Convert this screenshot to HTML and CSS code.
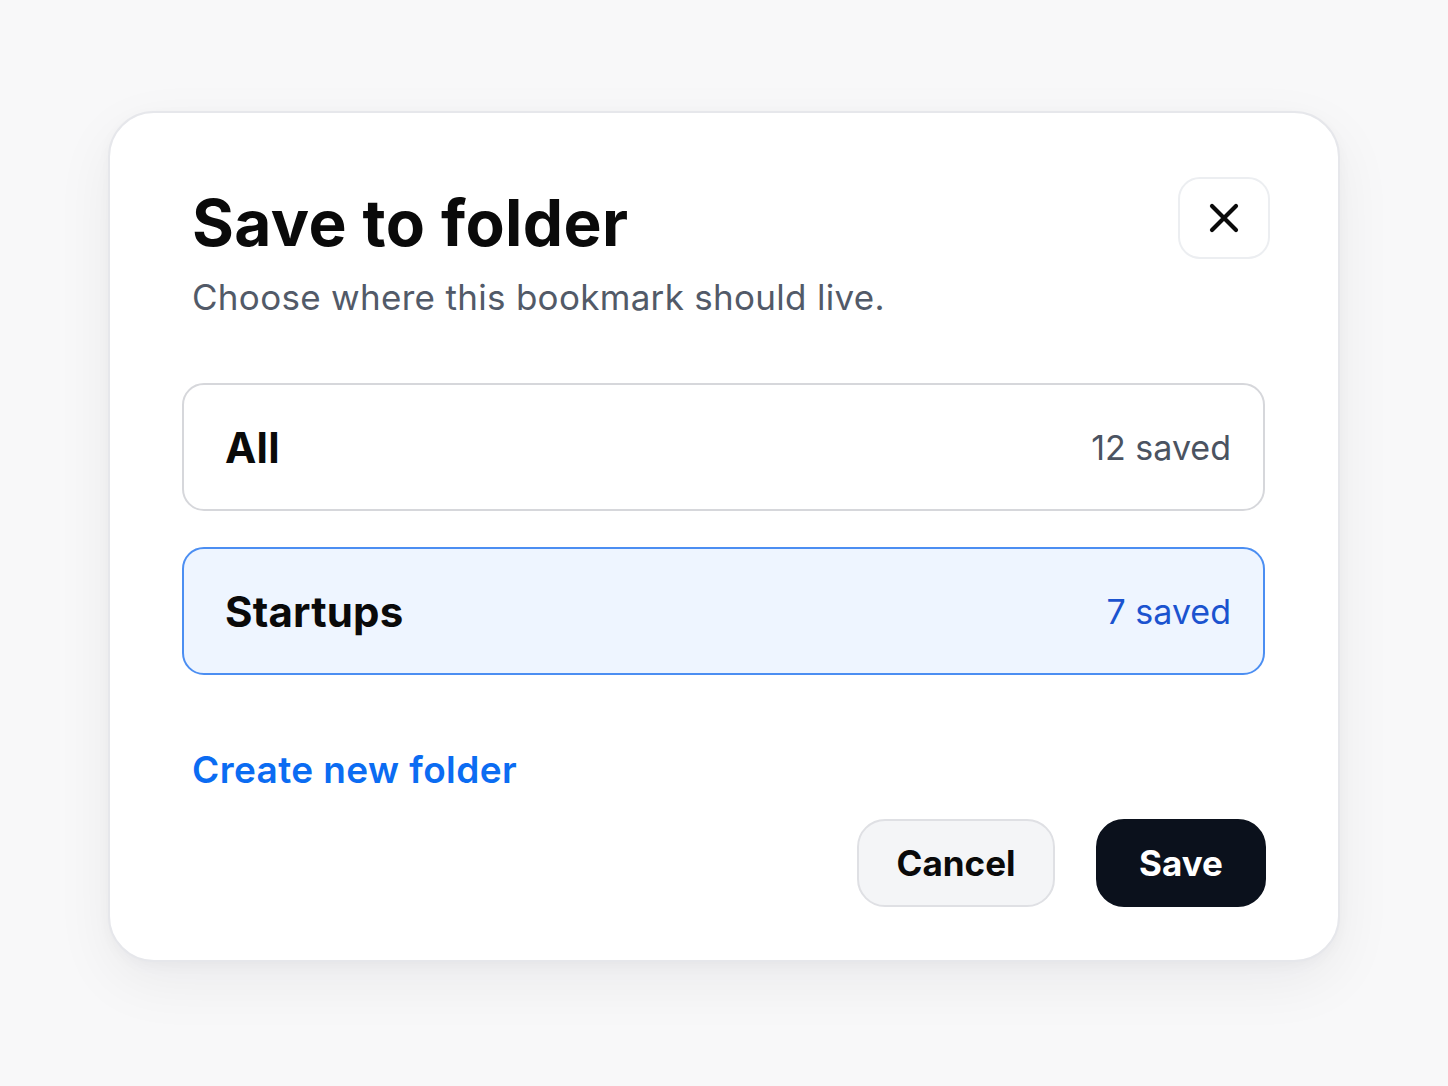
FILE: index.html
```html
<!DOCTYPE html>
<html lang="en">
<head>
<meta charset="utf-8">
<title>Save to folder</title>
<link rel="stylesheet" href="styles.css">
</head>
<body>
<div class="stage">
  <div class="dialog" role="dialog" aria-labelledby="dlg-title">
    <div class="header">
      <div class="heading">
        <h1 id="dlg-title" class="title">Save to folder</h1>
        <p class="subtitle">Choose where this bookmark should live.</p>
      </div>
      <button class="close" aria-label="Close">
        <svg width="30" height="30" viewBox="0 0 30 30" aria-hidden="true">
          <path d="M3 3 L27 27 M27 3 L3 27" stroke="#0a0a0a" stroke-width="4.2" stroke-linecap="round" fill="none"/>
        </svg>
      </button>
    </div>
    <div class="folders">
      <div class="folder">
        <span class="folder-name">All</span>
        <span class="folder-count">12 saved</span>
      </div>
      <div class="folder selected">
        <span class="folder-name">Startups</span>
        <span class="folder-count">7 saved</span>
      </div>
    </div>
    <a class="create" href="#">Create new folder</a>
    <div class="actions">
      <button class="btn btn-cancel">Cancel</button>
      <button class="btn btn-save">Save</button>
    </div>
  </div>
</div>
</body>
</html>
```

FILE: styles.css
```css
* { box-sizing: border-box; }

html, body {
  margin: 0;
  padding: 0;
  background: #f8f8f9;
  font-family: Inter, "Noto Sans", "Liberation Sans", sans-serif;
}

.stage {
  width: 1448px;
  height: 1086px;
  padding: 111px 108px 0 108px;
}

.dialog {
  width: 1232px;
  height: 851px;
  background: #ffffff;
  border: 2px solid #e6e7eb;
  border-radius: 46px;
  box-shadow: 0 20px 60px rgba(20, 24, 40, 0.06), 0 4px 14px rgba(20, 24, 40, 0.03);
  padding: 64px 68px 0 73px;
  display: flex;
  flex-direction: column;
}

.header {
  display: flex;
  justify-content: space-between;
  align-items: flex-start;
}

.heading {
  padding: 8px 0 0 9px;
}

.title {
  margin: 0;
  font-size: 64px;
  line-height: 76px;
  font-weight: 700;
  color: #0a0a0a;
  letter-spacing: 0.4px;
}

.subtitle {
  margin: 14px 0 0 0;
  font-size: 35px;
  line-height: 44px;
  font-weight: 400;
  color: #525a68;
  letter-spacing: 0.3px;
}

.close {
  width: 92px;
  height: 82px;
  border: 2px solid #eceef1;
  border-radius: 22px;
  background: #ffffff;
  display: flex;
  align-items: center;
  justify-content: center;
  padding: 0;
  cursor: pointer;
}

.folders {
  margin-top: 64px;
  margin-left: -1px;
  margin-right: 5px;
  display: flex;
  flex-direction: column;
  gap: 36px;
}

.folder {
  height: 128px;
  border: 2px solid #d6d7db;
  border-radius: 22px;
  background: #ffffff;
  display: flex;
  align-items: center;
  justify-content: space-between;
  padding: 0 32px 0 41px;
}

.folder.selected {
  background: #eef5ff;
  border-color: #4b8ef2;
}

.folder-name {
  font-size: 42px;
  font-weight: 700;
  color: #0a0a0a;
  letter-spacing: 0.2px;
}

.folder-count {
  font-size: 34px;
  font-weight: 400;
  color: #4b5361;
}

.folder.selected .folder-count {
  color: #1b53cf;
}

.create {
  margin: 72px 0 0 9px;
  align-self: flex-start;
  font-size: 37px;
  line-height: 46px;
  font-weight: 600;
  color: #0b6cf2;
  text-decoration: none;
  letter-spacing: 0.4px;
}

.actions {
  margin-top: 26px;
  margin-right: 4px;
  display: flex;
  justify-content: flex-end;
  gap: 41px;
}

.btn {
  height: 88px;
  border-radius: 28px;
  font-family: inherit;
  font-size: 35px;
  font-weight: 700;
  cursor: pointer;
}

.btn-cancel {
  width: 198px;
  background: #f4f5f7;
  border: 2px solid #dfe0e4;
  color: #0a0a0a;
}

.btn-save {
  width: 170px;
  background: #0b111c;
  border: 2px solid #0b111c;
  color: #ffffff;
}
```
